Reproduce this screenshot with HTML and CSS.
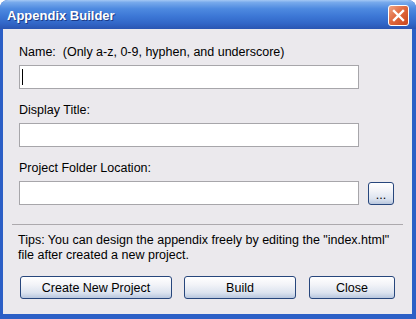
FILE: index.html
```html
<!DOCTYPE html>
<html lang="en">
  <head>
    <meta charset="UTF-8" />
    <meta name="viewport" content="width=device-width, initial-scale=1.0" />
    <title>Appendix Builder</title>
    <link rel="stylesheet" href="styles.css">
  </head>
  <body>
    <div class="window">
      <div class="title-bar">
        <span class="title-text">Appendix Builder</span>
        <div class="close-btn">
          <svg width="13" height="13" viewBox="0 0 13 13">
            <path d="M2 2 L11 11 M11 2 L2 11" stroke="#fff" stroke-width="2.4" stroke-linecap="square" />
          </svg>
        </div>
      </div>

      <div class="client">
        <div class="field">
          <label class="field-label">Name:&nbsp; (Only a-z, 0-9, hyphen, and underscore)</label>
          <div class="textbox"><span class="caret"></span></div>
        </div>

        <div class="field">
          <label class="field-label">Display Title:</label>
          <div class="textbox"></div>
        </div>

        <div class="field">
          <label class="field-label">Project Folder Location:</label>
          <div class="folder-row">
            <div class="textbox"></div>
            <button class="btn browse-btn">...</button>
          </div>
        </div>

        <hr class="separator" />

        <p class="tips">
          Tips: You can design the appendix freely by editing the "index.html"<br />
          file after created a new project.
        </p>

        <div class="button-row">
          <button class="btn btn-create">Create New Project</button>
          <button class="btn btn-build">Build</button>
          <button class="btn btn-close">Close</button>
        </div>
      </div>
    </div>
  </body>
</html>
```

FILE: styles.css
```css
* {
  margin: 0;
  padding: 0;
  box-sizing: border-box;
}

body {
  font-family: "Liberation Sans", Arial, sans-serif;
  font-size: 12.5px;
  color: #000;
  width: 416px;
  height: 319px;
  overflow: hidden;
  background: #fff;
}

.window {
  width: 416px;
  height: 319px;
  display: flex;
  flex-direction: column;
  background: #2c5fc6;
  border-radius: 8px 8px 0 0;
  overflow: hidden;
}

/* タイトルバー */
.title-bar {
  height: 29px;
  flex-shrink: 0;
  display: flex;
  align-items: center;
  justify-content: space-between;
  padding: 0 7px 0 7px;
  background: linear-gradient(
    to bottom,
    #a4c8f4 0%,
    #78aaec 8%,
    #4e8ae0 30%,
    #3d78d6 55%,
    #3267c8 80%,
    #2a55b2 100%
  );
}

.title-text {
  font-family: "Liberation Sans", Arial, sans-serif;
  font-weight: bold;
  font-size: 13px;
  color: #fff;
  text-shadow: 1px 1px 0 #1b3a86;
  margin-top: 1px;
}

.close-btn {
  width: 21px;
  height: 21px;
  border: 1px solid #fff;
  border-radius: 3px;
  background: linear-gradient(135deg, #f0a585 0%, #e06a40 45%, #c9461c 100%);
  display: flex;
  align-items: center;
  justify-content: center;
  margin-top: 1px;
}

/* クライアント領域 */
.client {
  flex: 1;
  margin: 0 4px 5px 3px;
  background: #ebe9ed;
  padding: 16px 15px 0 16px;
  display: flex;
  flex-direction: column;
}

.field {
  display: flex;
  flex-direction: column;
  gap: 5px;
  margin-bottom: 14px;
}

.field-label {
  line-height: 15px;
}

.textbox {
  width: 340px;
  height: 24px;
  background: #fff;
  border: 1px solid #a7a6aa;
  position: relative;
}

.caret {
  position: absolute;
  left: 2px;
  top: 3px;
  width: 1px;
  height: 16px;
  background: #000;
}

.folder-row {
  display: flex;
  align-items: center;
  gap: 9px;
}

.btn {
  font-family: "Liberation Sans", Arial, sans-serif;
  font-size: 12.5px;
  color: #000;
  height: 23px;
  border: 1px solid #27467c;
  border-radius: 3px;
  background: linear-gradient(
    to bottom,
    #ffffff 0%,
    #f3f4f8 35%,
    #dce3ef 75%,
    #b8c6de 100%
  );
}

.browse-btn {
  width: 26px;
  height: 23px;
  line-height: 14px;
  padding-top: 3px;
}

.separator {
  border: none;
  border-top: 1px solid #aca9ad;
  margin: 5px -6px 8px -7px;
}

.tips {
  line-height: 15px;
  margin-left: -1px;
}

.button-row {
  display: flex;
  gap: 12px;
  margin-top: 13px;
  margin-left: 1px;
}

.btn-create {
  width: 152px;
}

.btn-build {
  width: 112px;
}

.btn-close {
  width: 86px;
  margin-left: 1px;
}
```
